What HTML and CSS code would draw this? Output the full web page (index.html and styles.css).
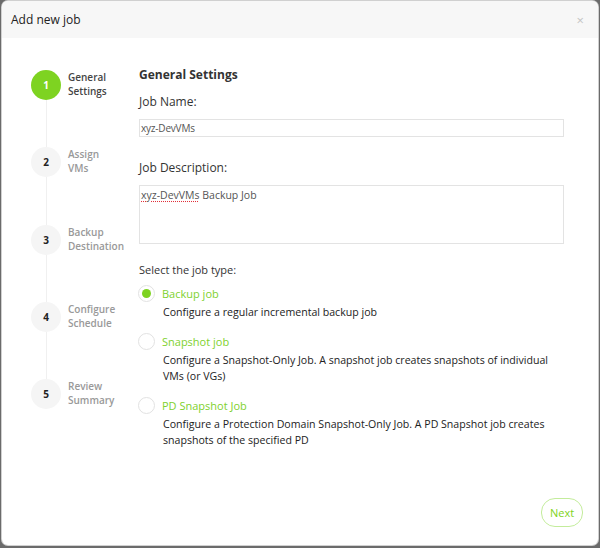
FILE: index.html
```html
<!DOCTYPE html>
<html>
<head>
<meta charset="utf-8">
<link rel="stylesheet" href="styles.css">
</head>
<body>
<div class="modal">
  <div class="modal-header">
    <span class="modal-title">Add new job</span>
    <span class="close">&times;</span>
  </div>
  <div class="modal-body">
    <div class="steps">
      <div class="step active">
        <div class="circle">1</div>
        <div class="step-label">General<br>Settings</div>
      </div>
      <div class="connector"></div>
      <div class="step">
        <div class="circle">2</div>
        <div class="step-label">Assign<br>VMs</div>
      </div>
      <div class="connector"></div>
      <div class="step">
        <div class="circle">3</div>
        <div class="step-label">Backup<br>Destination</div>
      </div>
      <div class="connector"></div>
      <div class="step">
        <div class="circle">4</div>
        <div class="step-label">Configure<br>Schedule</div>
      </div>
      <div class="connector"></div>
      <div class="step">
        <div class="circle">5</div>
        <div class="step-label">Review<br>Summary</div>
      </div>
    </div>
    <div class="form">
      <div class="section-title">General Settings</div>
      <div class="field-label">Job Name:</div>
      <div class="input">xyz-DevVMs</div>
      <div class="field-label desc-label">Job Description:</div>
      <div class="textarea"><span class="misspelled">xyz-DevVMs</span> Backup Job</div>
      <div class="type-label">Select the job type:</div>
      <div class="option">
        <div class="radio-row"><span class="radio checked"></span><span class="radio-text">Backup job</span></div>
        <div class="option-desc">Configure a regular incremental backup job</div>
      </div>
      <div class="option">
        <div class="radio-row"><span class="radio"></span><span class="radio-text">Snapshot job</span></div>
        <div class="option-desc">Configure a Snapshot-Only Job. A snapshot job creates snapshots of individual VMs (or VGs)</div>
      </div>
      <div class="option">
        <div class="radio-row"><span class="radio"></span><span class="radio-text">PD Snapshot Job</span></div>
        <div class="option-desc">Configure a Protection Domain Snapshot-Only Job. A PD Snapshot job creates snapshots of the specified PD</div>
      </div>
    </div>
  </div>
  <div class="modal-footer">
    <button class="next">Next</button>
  </div>
</div>
</body>
</html>
```
FILE: styles.css
```css
* { box-sizing: border-box; }
html, body { margin: 0; padding: 0; }
body {
  width: 600px;
  height: 548px;
  background: #6b6b6b;
  font-family: "Open Sans", "Noto Sans", sans-serif;
  color: #333;
  padding: 1px 2px 3px 2px;
}
.modal {
  height: 544px;
  background: #fff;
  border-radius: 6px;
  overflow: hidden;
  display: flex;
  flex-direction: column;
  box-shadow: 0 0 0 1px #d0d0d0;
}
.modal-header {
  height: 37px;
  background: #f7f7f7;
  display: flex;
  align-items: center;
  justify-content: space-between;
  padding: 0 14px 0 9px;
  flex: none;
}
.modal-title {
  font-size: 12px;
  color: #222;
}
.close {
  font-size: 13px;
  color: #c4c4c4;
}
.modal-body {
  flex: 1;
  display: flex;
  padding: 30px 0 0 29px;
}
.steps {
  width: 108px;
  flex: none;
  display: flex;
  flex-direction: column;
  padding-top: 2px;
}
.step {
  display: flex;
  align-items: center;
  gap: 7px;
}
.circle {
  width: 30px;
  height: 30px;
  border-radius: 50%;
  background: #f5f5f5;
  color: #222;
  font-size: 10px;
  font-weight: 700;
  display: flex;
  align-items: center;
  justify-content: center;
  flex: none;
}
.step.active .circle {
  background: #7ed321;
  color: #fff;
}
.step-label {
  font-size: 10px;
  line-height: 14px;
  color: #999;
  font-weight: 600;
  margin-top: -2px;
}
.step.active .step-label { color: #444; }
.connector {
  width: 1px;
  height: 47.3px;
  background: #f0f0f0;
  margin-left: 15px;
}
.form {
  width: 425px;
  display: flex;
  flex-direction: column;
}
.section-title {
  font-size: 12px;
  font-weight: 700;
  line-height: 16px;
  color: #333;
  margin-top: -1px;
}
.field-label {
  font-size: 12px;
  line-height: 16px;
  color: #333;
  margin-top: 11px;
}
.desc-label { margin-top: 23px; }
.input {
  margin-top: 9px;
  height: 18px;
  border: 1px solid #e3e3e3;
  font-size: 10px;
  line-height: 16px;
  color: #555;
  padding: 0 1px;
  letter-spacing: -0.2px;
}
.textarea {
  margin-top: 9px;
  height: 59px;
  border: 1px solid #e3e3e3;
  font-size: 10.5px;
  line-height: 16px;
  color: #555;
  padding: 1px 1px;
}
.misspelled {
  text-decoration: underline dotted #e0303a;
  text-underline-offset: 2px;
}
.type-label {
  font-size: 11px;
  line-height: 16px;
  color: #333;
  margin-top: 18px;
}
.option { margin-top: 13px; }
.type-label + .option { margin-top: 7px; }
.radio-row {
  display: flex;
  align-items: center;
  gap: 7px;
  height: 16px;
}
.radio {
  width: 17px;
  height: 17px;
  border-radius: 50%;
  border: 1.5px solid #e2e2e2;
  background: #fff;
  display: flex;
  align-items: center;
  justify-content: center;
  flex: none;
  margin-left: -1px;
}
.radio.checked::after {
  content: "";
  width: 9px;
  height: 9px;
  border-radius: 50%;
  background: #7ed321;
}
.radio-text {
  font-size: 11px;
  color: #80d12e;
}
.option-desc {
  margin-top: 3px;
  padding-left: 24px;
  font-size: 10.6px;
  line-height: 16px;
  color: #222;
  padding-right: 10px;
}
.modal-footer {
  flex: none;
  display: flex;
  justify-content: flex-end;
  padding: 0 15px 18px 0;
}
.next {
  width: 42px;
  height: 29px;
  border-radius: 14px;
  border: 1.5px solid #c3ec9b;
  background: #fff;
  color: #7ed321;
  font-family: "Open Sans", "Noto Sans", sans-serif;
  font-size: 11px;
  padding: 0;
}
```
